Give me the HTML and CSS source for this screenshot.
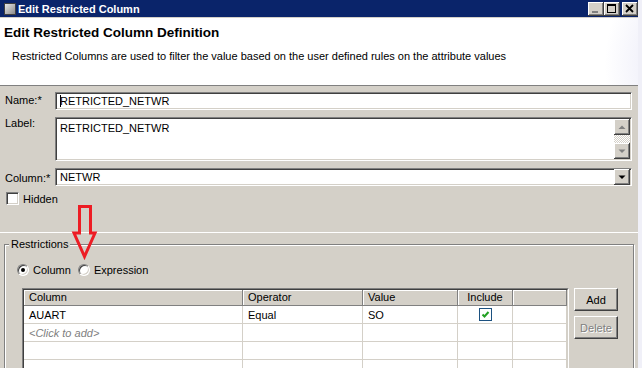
FILE: index.html
```html
<!DOCTYPE html>
<html lang="en">

<head>
    <meta charset="UTF-8">
    <meta name="viewport" content="width=device-width, initial-scale=1.0">
    <title>Edit Restricted Column</title>
    <link rel="stylesheet" href="styles.css">
</head>

<body>
    <div class="window">
        <!-- title bar -->
        <div class="titlebar">
            <span class="app-icon"></span>
            <span class="caption">Edit Restricted Column</span>
            <div class="caption-btns">
                <span class="cbtn">
                    <svg width="16" height="14"><rect x="4" y="9" width="6" height="2" fill="#808080" /></svg>
                </span>
                <span class="cbtn">
                    <svg width="16" height="14"><rect x="3.5" y="2.5" width="8" height="8" fill="none" stroke="#000" /><rect x="3" y="2" width="9" height="2" fill="#000" /></svg>
                </span>
                <span class="cbtn close">
                    <svg width="16" height="14"><path d="M4 3 L11 10 M11 3 L4 10" stroke="#000" stroke-width="1.8" fill="none" /></svg>
                </span>
            </div>
        </div>

        <!-- banner -->
        <div class="banner">
            <h1>Edit Restricted Column Definition</h1>
            <p>Restricted Columns are used to filter the value based on the user defined rules on the attribute values</p>
        </div>

        <!-- fields -->
        <div class="form">
            <label class="lbl lbl-name">Name:*</label>
            <div class="field"><span class="caret"></span>RETRICTED_NETWR</div>

            <label class="lbl lbl-label">Label:</label>
            <div class="field area">
                <span class="area-text">RETRICTED_NETWR</span>
                <div class="vscroll">
                    <span class="sbtn">
                        <svg width="14" height="14"><path d="M3.5 9 L7 5.5 L10.5 9 Z" fill="#808080" /></svg>
                    </span>
                    <span class="track"></span>
                    <span class="sbtn">
                        <svg width="14" height="14"><path d="M3.5 5.5 L7 9 L10.5 5.5 Z" fill="#808080" /></svg>
                    </span>
                </div>
            </div>

            <label class="lbl lbl-col">Column:*</label>
            <div class="field combo">
                <span class="combo-text">NETWR</span>
                <span class="sbtn">
                    <svg width="14" height="14"><path d="M3.5 5.5 L7 9 L10.5 5.5 Z" fill="#000" /></svg>
                </span>
            </div>
        </div>

        <div class="check-row"><span class="checkbox"></span>Hidden</div>

        <div class="divider"></div>

        <!-- restrictions -->
        <fieldset class="group">
            <legend>Restrictions</legend>
            <div class="radios">
                <span class="radio"><span class="radio-dot checked"></span>Column</span>
                <span class="radio"><span class="radio-dot"></span>Expression</span>
            </div>
            <div class="grid-row">
                <div class="grid-frame">
                    <div class="grid-inner">
                        <table>
                            <colgroup>
                                <col style="width:219px">
                                <col style="width:120px">
                                <col style="width:95px">
                                <col style="width:55px">
                                <col style="width:54px">
                            </colgroup>
                            <tr>
                                <th>Column</th>
                                <th>Operator</th>
                                <th>Value</th>
                                <th class="center">Include</th>
                                <th></th>
                            </tr>
                            <tr>
                                <td>AUART</td>
                                <td>Equal</td>
                                <td>SO</td>
                                <td class="center"><span class="tick"><svg width="11" height="11"><path d="M2.5 5.5 L4.5 7.5 L8.5 3" stroke="#22a022" stroke-width="2" fill="none" /></svg></span></td>
                                <td></td>
                            </tr>
                            <tr>
                                <td class="hint">&lt;Click to add&gt;</td>
                                <td></td>
                                <td></td>
                                <td></td>
                                <td></td>
                            </tr>
                            <tr>
                                <td></td>
                                <td></td>
                                <td></td>
                                <td></td>
                                <td></td>
                            </tr>
                            <tr>
                                <td></td>
                                <td></td>
                                <td></td>
                                <td></td>
                                <td></td>
                            </tr>
                        </table>
                    </div>
                </div>
                <div class="side-btns">
                    <button class="btn">Add</button>
                    <button class="btn" disabled>Delete</button>
                </div>
            </div>
        </fieldset>

        <!-- red annotation arrow -->
        <svg class="marker" width="30" height="62">
            <path d="M9.5 3.5 L20.5 3.5 L20.5 30 L25 30 L14.5 53.5 L4 30 L9.5 30 Z" fill="none" stroke="#ed1c24" stroke-width="3" />
        </svg>
    </div>
</body>

</html>
```

FILE: styles.css
```css
* {
    margin: 0;
    padding: 0;
    box-sizing: border-box;
}

body {
    width: 642px;
    height: 368px;
    overflow: hidden;
    background: #f0f0f8;
    font: 11px "Liberation Sans", Arial, sans-serif;
    color: #000;
}

.window {
    position: relative;
    width: 638px;
    height: 368px;
    overflow: hidden;
    background: #d4d0c8;
}

/* title bar */
.titlebar {
    display: flex;
    align-items: center;
    height: 18px;
    padding-left: 4px;
    background: #0a246a;
    border-bottom: 1px solid #d4d0c8;
    color: #fff;
    font-weight: bold;
}

.app-icon {
    width: 12px;
    height: 12px;
    margin-right: 2px;
    border: 1px solid #404040;
    background: linear-gradient(135deg, #e8e8e8, #8a8a8a);
}

.caption {
    flex: 1;
}

.caption-btns {
    display: flex;
    align-self: flex-start;
    margin-top: 2px;
}

.cbtn {
    width: 16px;
    height: 14px;
    background: #d4d0c8;
    box-shadow: inset -1px -1px #404040, inset 1px 1px #fff, inset -2px -2px #808080;
}

.cbtn svg {
    display: block;
}

.cbtn.close {
    margin-left: 2px;
}

/* banner */
.banner {
    height: 68px;
    padding: 7px 0 0 4px;
    background: radial-gradient(ellipse 110px 120px at 112% 70%, #e2e2f4 0%, #ececf8 50%, #fff 100%);
    border-bottom: 1px solid #808080;
}

.banner h1 {
    font-size: 13.5px;
    line-height: 16px;
    font-weight: bold;
}

.banner p {
    margin: 9px 0 0 8px;
    line-height: 13px;
}

/* form */
.form {
    display: grid;
    grid-template-columns: 50px 1fr;
    row-gap: 7px;
    padding: 6px 6px 0 5px;
}

.lbl {
    line-height: 13px;
}

.lbl-name {
    padding-top: 2px;
}

.lbl-col {
    padding-top: 4px;
}

.field {
    height: 18px;
    padding: 1px 4px 0;
    line-height: 14px;
    background: #fff;
    border: 1px solid;
    border-color: #808080 #fff #fff #808080;
    box-shadow: inset 1px 1px #404040, inset -1px -1px #d4d0c8;
    white-space: nowrap;
}

.caret {
    display: inline-block;
    width: 1px;
    height: 12px;
    margin-right: -1px;
    vertical-align: -2px;
    background: #000;
}

.area {
    display: flex;
    height: 44px;
    padding: 1px 1px 1px 4px;
}

.area-text {
    flex: 1;
    padding-top: 2px;
}

.vscroll {
    display: flex;
    flex-direction: column;
    width: 16px;
}

.track {
    flex: 1;
    background-image: conic-gradient(#fff 25%, #d4d0c8 0 50%, #fff 0 75%, #d4d0c8 0);
    background-size: 2px 2px;
}

.sbtn {
    width: 16px;
    height: 16px;
    padding: 1px;
    background: #d4d0c8;
    box-shadow: inset -1px -1px #404040, inset 1px 1px #fff, inset -2px -2px #808080;
}

.sbtn svg {
    display: block;
}

.combo {
    display: flex;
    align-items: center;
    padding: 0 1px 0 4px;
}

.combo-text {
    flex: 1;
}

/* hidden checkbox */
.check-row {
    display: flex;
    align-items: center;
    gap: 4px;
    height: 13px;
    margin: 6px 0 0 6px;
}

.checkbox {
    width: 13px;
    height: 13px;
    background: #fff;
    border: 1px solid;
    border-color: #808080 #fff #fff #808080;
    box-shadow: inset 1px 1px #404040, inset -1px -1px #d4d0c8;
}

.divider {
    height: 1px;
    margin-top: 27px;
    background: #fff;
}

/* restrictions group */
.group {
    height: 134px;
    margin: 5px 4px 0;
    padding: 12px 0 0 12px;
    border: 1px solid #808080;
    box-shadow: inset 1px 1px #fff, 1px 1px #fff;
}

.group legend {
    margin-left: -8px;
    padding: 0 2px;
    line-height: 13px;
    background: #d4d0c8;
}

.radios {
    display: flex;
    align-items: center;
    gap: 7px;
    height: 13px;
}

.radio {
    display: flex;
    align-items: center;
    gap: 4px;
}

.radio-dot {
    position: relative;
    width: 12px;
    height: 12px;
    border-radius: 50%;
    background: #fff;
    border: 1px solid;
    border-color: #808080 #fff #fff #808080;
    box-shadow: inset 1px 1px #404040, inset -1px -1px #d4d0c8;
}

.radio-dot.checked::after {
    content: "";
    position: absolute;
    left: 3px;
    top: 3px;
    width: 4px;
    height: 4px;
    border-radius: 50%;
    background: #000;
}

.grid-row {
    display: flex;
    align-items: flex-start;
    margin: 12px 0 0 5px;
}

.grid-frame {
    width: 547px;
    height: 84px;
    border: 1px solid;
    border-color: #808080 #fff #fff #808080;
}

.grid-inner {
    height: 100%;
    overflow: hidden;
    background: #fff;
    border: 1px solid;
    border-color: #404040 #d4d0c8 #d4d0c8 #404040;
}

table {
    width: 543px;
    table-layout: fixed;
    border-collapse: separate;
    border-spacing: 0;
}

th {
    height: 16px;
    padding: 0 5px;
    line-height: 15px;
    font-weight: normal;
    text-align: left;
    background: #d4d0c8;
    border-right: 1px solid #808080;
    border-bottom: 1px solid #808080;
    box-shadow: inset 1px 1px #fff;
}

td {
    height: 18px;
    padding: 0 5px;
    border-right: 1px solid #d4d0c8;
    border-bottom: 1px solid #d4d0c8;
    white-space: nowrap;
}

.center {
    text-align: center;
}

.hint {
    color: #808080;
    font-style: italic;
}

.tick {
    display: inline-block;
    width: 13px;
    height: 13px;
    vertical-align: middle;
    border: 1px solid #1c5180;
    background: #fff;
}

.tick svg {
    display: block;
}

.side-btns {
    display: flex;
    flex-direction: column;
    gap: 5px;
    margin-left: 5px;
}

.btn {
    width: 44px;
    height: 23px;
    font: inherit;
    background: #d4d0c8;
    border: 1px solid;
    border-color: #fff #404040 #404040 #fff;
    box-shadow: inset -1px -1px #808080;
}

.btn:disabled {
    color: #808080;
    text-shadow: 1px 1px #fff;
}

/* annotation overlay */
.marker {
    position: absolute;
    left: 70px;
    top: 203px;
}
```
